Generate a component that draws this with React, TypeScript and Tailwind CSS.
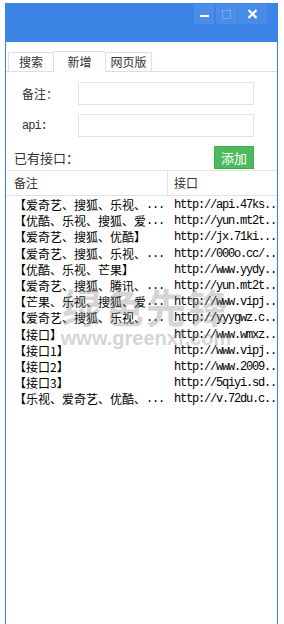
import React from 'react';

const ROWS: [string, boolean, string][] = [
  ['【爱奇艺、搜狐、乐视、', true, 'http://api.47ks..'],
  ['【优酷、乐视、搜狐、爱', true, 'http://yun.mt2t..'],
  ['【爱奇艺、搜狐、优酷】', false, 'http://jx.71ki...'],
  ['【爱奇艺、搜狐、乐视、', true, 'http://000o.cc/..'],
  ['【优酷、乐视、芒果】', false, 'http://www.yydy..'],
  ['【爱奇艺、搜狐、腾讯、', true, 'http://yun.mt2t..'],
  ['【芒果、乐视、搜狐、爱', true, 'http://www.vipj..'],
  ['【爱奇艺、搜狐、乐视、', true, 'http://yyygwz.c..'],
  ['【接口】', false, 'http://www.wmxz..'],
  ['【接口1】', false, 'http://www.vipj..'],
  ['【接口2】', false, 'http://www.2009..'],
  ['【接口3】', false, 'http://5qiyi.sd..'],
  ['【乐视、爱奇艺、优酷、', true, 'http://v.72du.c..'],
];

const SANS = "font-['Microsoft_YaHei','Noto_Sans_CJK_SC',sans-serif]";
const MONO = "font-['Liberation_Mono','Noto_Sans_CJK_SC',monospace]";

export default function App() {
  return (
    <div className="relative w-[284px] h-[624px] bg-white pt-[3px] pl-[5px] overflow-hidden">
      <div className="w-[273px] h-[621px] flex flex-col border-x border-[#3b80e3]">
        {/* title bar */}
        <div className="h-[39px] -mx-px bg-[#3c83e6] flex justify-end items-start pr-[11px]">
          <div className="mt-[1px] w-[20px] h-[20px] bg-[#4a8de9] flex items-center justify-center">
            <div className="w-[9px] h-[2px] bg-white mt-[4px]" />
          </div>
          <div className="mt-[1px] ml-[2px] w-[21px] h-[20px] bg-[#4a8de9] flex items-center justify-center">
            <div className="w-[9px] h-[9px] border border-[#79aaf0]" />
          </div>
          <div className="mt-[1px] ml-[1px] w-[29px] h-[20px] bg-[#4a8de9] flex items-center justify-center">
            <svg width="11" height="10" viewBox="0 0 11 10">
              <path d="M1.5 1 L9.5 9 M9.5 1 L1.5 9" stroke="white" strokeWidth="2.2" />
            </svg>
          </div>
        </div>

        {/* tabs */}
        <div className={`mt-[9px] h-[21px] flex items-end border-b border-[#dedede] pl-[2px] text-[12px] text-[#333] ${SANS}`}>
          <div className="w-[46px] h-[19px] border border-b-0 border-[#dedede] flex items-center justify-center">搜索</div>
          <div className="w-[51px] h-[21px] border-t border-[#dedede] bg-white -mb-px flex items-center justify-center">新增</div>
          <div className="w-[47px] h-[19px] border border-b-0 border-[#dedede] flex items-center justify-center">网页版</div>
        </div>

        {/* form */}
        <div className="pt-[10px] text-[12px] text-[#333]">
          <div className="flex items-center h-[23px]">
            <span className={`w-[72px] pl-[16px] ${SANS}`}>备注：</span>
            <div className="w-[176px] h-[23px] border border-[#e3e3e3]" />
          </div>
          <div className="flex items-center h-[23px] mt-[9px]">
            <span className={`w-[72px] pl-[16px] ${MONO} tracking-[-1px]`}>api:</span>
            <div className="w-[176px] h-[23px] border border-[#e3e3e3]" />
          </div>
          <div className="flex items-center justify-between h-[23px] mt-[9px] pr-[23px]">
            <span className={`pl-[8px] text-[13px] ${SANS}`}>已有接口：</span>
            <button className={`w-[40px] h-[23px] bg-[#4cbb5d] border border-[#3fae50] text-white text-[13px] ${SANS}`}>添加</button>
          </div>
        </div>

        {/* table */}
        <div className="mt-px border-t border-[#e3e3e3]">
          <div className={`h-[25px] flex items-center border-b border-[#e3e3e3] text-[12px] text-[#333] ${SANS}`}>
            <div className="w-[162px] h-full flex items-center pl-[8px] border-r border-[#e3e3e3]">备注</div>
            <div className="pl-[6px]">接口</div>
          </div>
          <div className="pt-px">
            {ROWS.map(([name, cut, url], i) => (
              <div key={i} className="h-[16.2px] flex items-center text-[12px] text-black whitespace-nowrap">
                <div className="w-[161px] shrink-0 pl-[8px] flex">
                  <span className="shrink-0 font-['Noto_Sans_CJK_SC',sans-serif] leading-none">{name}</span>
                  {cut && <span className={`shrink-0 ${MONO} tracking-[-1.2px] leading-none`}>...</span>}
                </div>
                <div className={`shrink-0 pl-[7px] ${MONO} tracking-[-1.2px] leading-none`}>{url}</div>
              </div>
            ))}
          </div>
        </div>
      </div>

      {/* watermark */}
      <div className="absolute left-[56px] top-[284px] w-[180px] flex flex-col items-center pointer-events-none opacity-35 text-[#8a8a8a]">
        <div className={`text-[40px] leading-[44px] font-bold tracking-[2px] ${SANS}`}>绿色先锋</div>
        <div className="text-[20px] leading-[20px] font-bold font-['Liberation_Sans',sans-serif]">www.greenxf.com</div>
      </div>
    </div>
  );
}
